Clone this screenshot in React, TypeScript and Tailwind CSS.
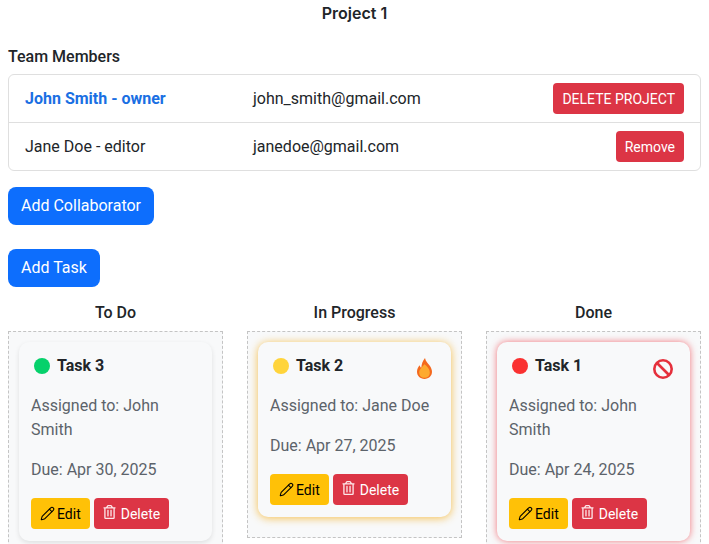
import { Pencil } from 'lucide-react'
import { FaRegTrashAlt } from 'react-icons/fa'

type Task = {
  id: number
  title: string
  assignee: string
  due: string
  dot: string
  cardClass: string
  flag?: 'fire' | 'ban'
}

const columns: { name: string; task: Task }[] = [
  {
    name: 'To Do',
    task: { id: 3, title: 'Task 3', assignee: 'John Smith', due: 'Apr 30, 2025', dot: 'bg-[#06d16b]', cardClass: 'shadow-[0_2px_5px_rgba(0,0,0,0.1)]' },
  },
  {
    name: 'In Progress',
    task: { id: 2, title: 'Task 2', assignee: 'Jane Doe', due: 'Apr 27, 2025', dot: 'bg-[#ffd43b]', cardClass: 'shadow-[0_1px_8px_rgba(245,175,30,0.8)]', flag: 'fire' },
  },
  {
    name: 'Done',
    task: { id: 1, title: 'Task 1', assignee: 'John Smith', due: 'Apr 24, 2025', dot: 'bg-[#fa3131]', cardClass: 'shadow-[0_0_7px_rgba(240,60,70,0.7)]', flag: 'ban' },
  },
]

function Fire() {
  return (
    <svg width="15" height="21" viewBox="1.5 1 15 20" preserveAspectRatio="none" aria-hidden="true">
      <path d="M9.500 1c.6 3.200 2.600 4.600 4.600 7.200 1.500 2 2.400 4 2.400 6 0 4-3.300 6.800-7.500 6.800S1.500 18.200 1.500 14.200c0-2.600 1.300-4.600 2.700-6.200.3 1.200.8 2 1.600 2.400C6 7 7.200 3.500 9.500 1z" fill="#f4691e" />
      <path d="M9 7c2.800 2.400 5.300 4.600 5.300 7.800 0 3.200-2.300 5-5.300 5s-5.300-1.800-5.300-5C3.700 11.600 6.700 9.800 9 7z" fill="#fdaa30" />
    </svg>
  )
}

function Ban() {
  return (
    <svg width="20" height="20" viewBox="0 0 20 20" fill="none" stroke="#e5303c" strokeWidth="2.600" aria-hidden="true">
      <circle cx="10" cy="10" r="8.700" />
      <path d="M4 4l12 12" />
    </svg>
  )
}

function TaskCard({ task }: { task: Task }) {
  return (
    <div className={`relative rounded-[10px] bg-[#f8f9fa] p-3 ${task.cardClass}`}>
      <div className="flex items-center gap-[7px] pb-[17px] pl-[3px] pt-[1px]">
        <span className={`h-4 w-4 rounded-full ${task.dot}`} />
        <span className="text-base font-bold leading-[22px] text-[#212529]">{task.title}</span>
      </div>
      {task.flag === 'fire' && (
        <span className="absolute right-[19px] top-4">
          <Fire />
        </span>
      )}
      {task.flag === 'ban' && (
        <span className="absolute right-[17px] top-[17px]">
          <Ban />
        </span>
      )}
      <p className="mb-4 text-base leading-6 text-[#5c636a]">Assigned to: {task.assignee}</p>
      <p className="mb-4 text-base leading-6 text-[#5c636a]">Due: {task.due}</p>
      <div className="flex gap-1">
        <button className="flex h-[31px] items-center gap-[2px] rounded bg-[#ffc107] px-[9px] text-sm text-black">
          <Pencil size={15} strokeWidth={1.700} />
          Edit
        </button>
        <button className="flex h-[31px] items-center gap-[5px] rounded bg-[#dc3545] px-[9px] text-sm text-white">
          <FaRegTrashAlt className="mb-[3px] h-[14px] w-[13px] text-[#fde8ea]" />
          Delete
        </button>
      </div>
    </div>
  )
}

export default function App() {
  return (
    <div className="h-[544px] overflow-hidden bg-white px-2 font-['Roboto',sans-serif] text-[#212529]">
      <h1 className="pt-[3px] text-center font-['Inter',sans-serif] text-base font-semibold leading-[21px]">Project 1</h1>
      <h2 className="mt-[21px] text-base font-medium leading-6">Team Members</h2>
      <div className="mt-[5px] rounded-md border border-[#dfdfdf]">
        <div className="flex h-12 items-center border-b border-[#dfdfdf] px-4">
          <span className="w-[228px] text-base font-bold text-[#1a6fe3]">John Smith - owner</span>
          <span className="text-base">john_smith@gmail.com</span>
          <button className="ml-auto h-[31px] rounded bg-[#dc3545] px-[9px] text-sm text-white">DELETE PROJECT</button>
        </div>
        <div className="flex h-[47px] items-center px-4">
          <span className="w-[228px] text-base">Jane Doe - editor</span>
          <span className="text-base">janedoe@gmail.com</span>
          <button className="ml-auto h-[31px] rounded bg-[#dc3545] px-[9px] text-sm text-white">Remove</button>
        </div>
      </div>
      <button className="mt-4 block h-[38px] rounded-lg bg-[#0d6efd] px-[13px] text-base text-white">Add Collaborator</button>
      <button className="mt-6 block h-[38px] rounded-lg bg-[#0d6efd] px-[13px] text-base text-white">Add Task</button>
      <div className="mt-[14px] grid grid-cols-3 items-start gap-6">
        {columns.map((col) => (
          <div key={col.name}>
            <div className="text-center text-base font-medium leading-6">{col.name}</div>
            <div className="mt-[6px] border border-dashed border-[#c4c4c4] bg-[#f8f9fa] p-[10px] pb-5">
              <TaskCard task={col.task} />
            </div>
          </div>
        ))}
      </div>
    </div>
  )
}
